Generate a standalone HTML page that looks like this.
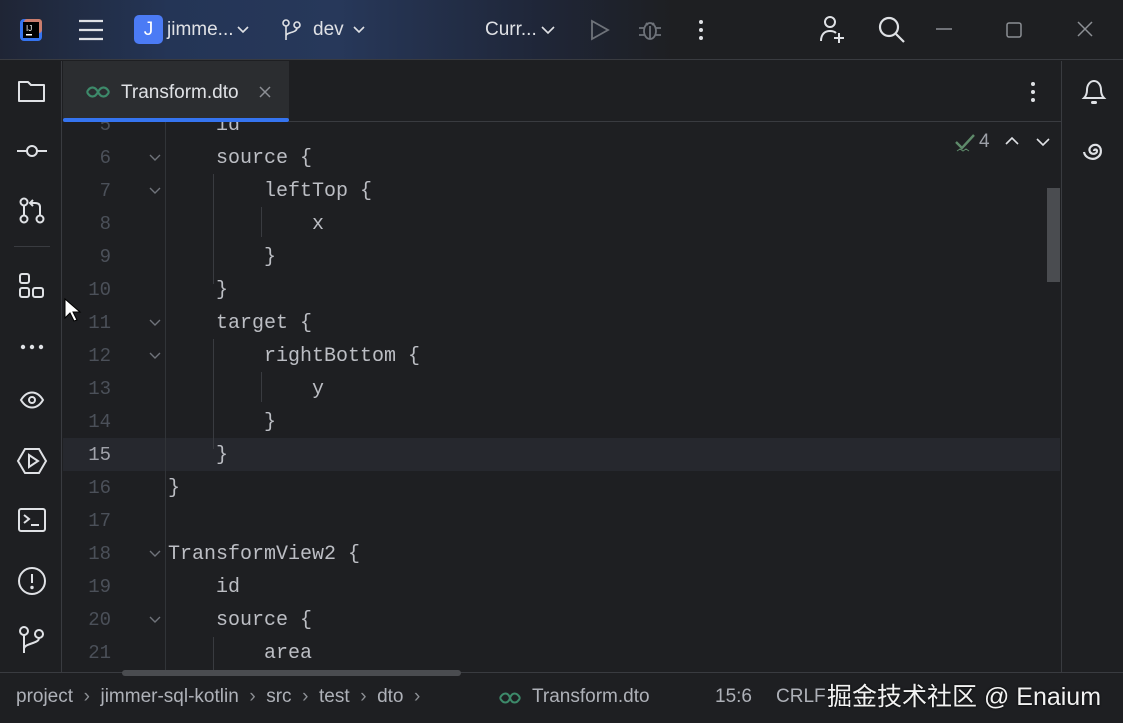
<!DOCTYPE html>
<html><head><meta charset="utf-8"><style>
*{margin:0;padding:0;box-sizing:border-box}
body{width:1123px;height:723px;overflow:hidden;background:#1e1f22;font-family:"Liberation Sans",sans-serif;color:#dfe1e5;position:relative}
.abs{position:absolute}
#title{left:0;top:0;width:1123px;height:60px;background:linear-gradient(90deg,#1f2535 0%,#243556 15%,#27385a 30%,#1f2638 48%,#1e1f22 60%);border-bottom:1px solid #393b40}
.tt{font-size:19px;color:#dfe1e5}
#left{left:0;top:61px;width:62px;height:611px;border-right:1px solid #393b40}
#right{left:1061px;top:61px;width:62px;height:611px;border-left:1px solid #393b40}
#tabs{left:63px;top:61px;width:998px;height:61px;border-bottom:1px solid #393b40}
#tab{left:63px;top:61px;width:226px;height:61px;background:#2b2d30}
#code{left:63px;top:122px;width:997px;height:550px;overflow:hidden;font-family:"Liberation Mono","DejaVu Sans Mono",monospace;font-size:20px;color:#bcbec4}
.ln{position:absolute;left:0;width:48px;text-align:right;color:#4b5059;font-size:19px;line-height:33px;margin-top:1px}
.tx{position:absolute;left:105px;white-space:pre;line-height:33px;margin-top:1px}
#status{left:0;top:672px;width:1123px;height:51px;border-top:1px solid #393b40;font-size:19px;color:#aeb1b8}
svg{position:absolute;overflow:visible}
</style></head><body>
<div id="title" class="abs">
 <svg style="left:18px;top:17px" width="26" height="26"><rect x="2" y="2" width="22" height="22" rx="4" fill="#3574f0"/><rect x="6" y="2" width="18" height="14" rx="3" fill="#f07f4c" opacity=".8"/><rect x="5" y="5" width="16" height="16" fill="#000"/><text x="8" y="14" font-size="8" fill="#fff" font-family="Liberation Sans">IJ</text><rect x="8" y="17" width="6" height="1.5" fill="#fff"/></svg>
 <svg style="left:78px;top:19px" width="26" height="22"><g stroke="#dfe1e5" stroke-width="2.2"><line x1="1" y1="2" x2="25" y2="2"/><line x1="1" y1="11" x2="25" y2="11"/><line x1="1" y1="20" x2="25" y2="20"/></g></svg>
 <div class="abs" style="left:134px;top:15px;width:29px;height:29px;background:#4b7bf5;border-radius:5px;text-align:center;line-height:29px;font-size:19px;color:#fff">J</div>
 <div class="abs tt" style="left:167px;top:19px">jimme...</div>
 <svg style="left:237px;top:26px" width="12" height="8"><path d="M1 1l5 5 5-5" stroke="#dfe1e5" stroke-width="1.6" fill="none"/></svg>
 <svg style="left:282px;top:19px" width="20" height="22"><g stroke="#dfe1e5" stroke-width="1.6" fill="none"><circle cx="4" cy="4" r="3"/><circle cx="15" cy="6" r="3"/><path d="M4 7v14M15 9c0 5-11 4-11 8"/></g></svg>
 <div class="abs tt" style="left:313px;top:19px">dev</div>
 <svg style="left:353px;top:26px" width="12" height="8"><path d="M1 1l5 5 5-5" stroke="#dfe1e5" stroke-width="1.6" fill="none"/></svg>
 <div class="abs tt" style="left:485px;top:19px">Curr...</div>
 <svg style="left:541px;top:26px" width="14" height="8"><path d="M1 1l6 6 6-6" stroke="#dfe1e5" stroke-width="1.6" fill="none"/></svg>
 <svg style="left:590px;top:19px" width="20" height="22"><path d="M2 2l16 9-16 9z" stroke="#6f737a" stroke-width="1.8" fill="none"/></svg>
 <svg style="left:638px;top:18px" width="24" height="24"><g stroke="#6f737a" stroke-width="1.8" fill="none"><ellipse cx="12" cy="13" rx="6" ry="8"/><path d="M8 5l2 2M16 5l-2 2M1 10h5M18 10h5M1 17h5M18 17h5M12 8v13"/></g></svg>
 <svg style="left:698px;top:19px" width="6" height="22"><g fill="#dfe1e5"><circle cx="3" cy="3" r="2"/><circle cx="3" cy="11" r="2"/><circle cx="3" cy="19" r="2"/></g></svg>
 <svg style="left:819px;top:15px" width="28" height="28"><g stroke="#dfe1e5" stroke-width="2" fill="none"><circle cx="11" cy="7" r="5"/><path d="M2 26c0-7 4-10 9-10 3 0 5 1 6 2M15 23h10M20 18v10"/></g></svg>
 <svg style="left:878px;top:16px" width="28" height="28"><g stroke="#dfe1e5" stroke-width="2.2" fill="none"><circle cx="11" cy="11" r="9"/><path d="M18 18l8 8"/></g></svg>
 <svg style="left:936px;top:28px" width="16" height="2"><line x1="0" y1="1" x2="16" y2="1" stroke="#8c8f94" stroke-width="1.5"/></svg>
 <svg style="left:1006px;top:22px" width="16" height="16"><rect x="1" y="1" width="14" height="14" rx="2" stroke="#8c8f94" stroke-width="1.5" fill="none"/></svg>
 <svg style="left:1077px;top:21px" width="16" height="16"><path d="M1 1l14 14M15 1L1 15" stroke="#8c8f94" stroke-width="1.5"/></svg>
</div>

<div id="left" class="abs"></div>
<svg style="left:18px;top:79px" width="28" height="24"><path d="M1 3h9l3 3h13v16H1z" stroke="#dfe1e5" stroke-width="2" fill="none" stroke-linejoin="round"/></svg>
<svg style="left:17px;top:141px" width="30" height="20"><g stroke="#dfe1e5" stroke-width="2" fill="none"><circle cx="15" cy="10" r="5"/><path d="M0 10h10M20 10h10"/></g></svg>
<svg style="left:18px;top:197px" width="28" height="28"><g stroke="#dfe1e5" stroke-width="2" fill="none"><circle cx="6" cy="5" r="3.5"/><circle cx="6" cy="22" r="3.5"/><circle cx="22" cy="22" r="3.5"/><path d="M6 9v9M22 18v-8c0-3-2-4-5-4h-4M15 3l-3 3 3 3"/></g></svg>
<div class="abs" style="left:14px;top:246px;width:36px;height:1px;background:#393b40"></div>
<svg style="left:19px;top:272px" width="26" height="28"><g stroke="#dfe1e5" stroke-width="2" fill="none"><rect x="1" y="2" width="9" height="9" rx="2"/><rect x="1" y="16" width="9" height="9" rx="2"/><rect x="14" y="16" width="10" height="9" rx="2"/></g></svg>
<svg style="left:20px;top:344px" width="26" height="6"><g fill="#dfe1e5"><circle cx="3" cy="3" r="2.2"/><circle cx="12" cy="3" r="2.2"/><circle cx="21" cy="3" r="2.2"/></g></svg>
<svg style="left:19px;top:390px" width="26" height="20"><g stroke="#dfe1e5" stroke-width="2" fill="none"><path d="M2 10c6-10 16-10 22 0-6 10-16 10-22 0z"/><circle cx="13" cy="10" r="3"/></g></svg>
<svg style="left:17px;top:446px" width="30" height="30"><g stroke="#dfe1e5" stroke-width="2" fill="none"><path d="M8 3h14l7 12-7 12H8L1 15z"/><path d="M12 9l9 6-9 6z"/></g></svg>
<svg style="left:18px;top:507px" width="28" height="26"><g stroke="#dfe1e5" stroke-width="2" fill="none"><rect x="1" y="2" width="26" height="22" rx="2"/><path d="M6 8l5 4-5 4M13 18h8"/></g></svg>
<svg style="left:17px;top:566px" width="30" height="30"><g stroke="#dfe1e5" stroke-width="2" fill="none"><circle cx="15" cy="15" r="13"/><path d="M15 8v9"/></g><circle cx="15" cy="21.5" r="1.7" fill="#dfe1e5"/></svg>
<svg style="left:19px;top:626px" width="28" height="28"><g stroke="#dfe1e5" stroke-width="2" fill="none"><circle cx="5" cy="5" r="4"/><circle cx="20" cy="8" r="4"/><path d="M5 9v18M20 12c0 6-15 5-15 11"/></g></svg>

<div id="right" class="abs"></div>
<svg style="left:1081px;top:78px" width="26" height="28"><g stroke="#dfe1e5" stroke-width="2" fill="none"><path d="M3 20c2-2 3-4 3-8 0-5 3-9 7-9s7 4 7 9c0 4 1 6 3 8z"/></g><rect x="10" y="23" width="6" height="3" rx="1.5" fill="#dfe1e5"/></svg>
<svg style="left:1081px;top:138px" width="26" height="26"><path d="M13 13c0-2 3-2 3 0 0 3-5 4-7 1-2-4 2-8 7-7 5 2 5 9 1 12-5 4-13 1-14-5" stroke="#dfe1e5" stroke-width="2.2" fill="none"/></svg>

<div id="tabs" class="abs"></div>
<div id="tab" class="abs"></div>
<div class="abs" style="left:63px;top:118px;width:226px;height:4px;background:#3574f0;border-radius:2px"></div>
<svg style="left:85px;top:85px" width="26" height="14"><path d="M2 7c3-6 8-6 11 0s8 6 11 0M2 7c3 6 8 6 11 0s8-6 11 0" stroke="#3d8a6a" stroke-width="2.2" fill="none"/></svg>
<div class="abs" style="left:121px;top:82px;font-size:19px;color:#dfe1e5">Transform.dto</div>
<svg style="left:259px;top:86px" width="12" height="12"><path d="M1 1l10 10M11 1L1 11" stroke="#8c8f94" stroke-width="1.5"/></svg>
<svg style="left:1030px;top:81px" width="6" height="22"><g fill="#dfe1e5"><circle cx="3" cy="3" r="2"/><circle cx="3" cy="11" r="2"/><circle cx="3" cy="19" r="2"/></g></svg>

<div id="code" class="abs">
 <div class="abs" style="left:0;top:316px;width:997px;height:33px;background:#26282e"></div>
 <div class="abs" style="left:102px;top:0;width:1px;height:550px;background:#313438"></div>
 <div class="abs" style="left:150px;top:52px;width:1px;height:110px;background:#393b40"></div>
 <div class="abs" style="left:198px;top:85px;width:1px;height:30px;background:#393b40"></div>
 <div class="abs" style="left:150px;top:217px;width:1px;height:110px;background:#393b40"></div>
 <div class="abs" style="left:198px;top:250px;width:1px;height:30px;background:#393b40"></div>
 <div class="abs" style="left:150px;top:515px;width:1px;height:40px;background:#393b40"></div>
 <div class="abs" style="left:984px;top:66px;width:13px;height:94px;background:#4a4c50"></div>
 <svg style="left:892px;top:12px" width="22" height="18"><path d="M1 8l6 6L19 1" stroke="#5e8a6a" stroke-width="2.4" fill="none"/><path d="M2 17l3-2 3 2 3-2 3 2" stroke="#5e8a6a" stroke-width="1" fill="none"/></svg>
 <div class="abs" style="left:916px;top:9px;font-family:'Liberation Sans';font-size:19px;color:#9da0a8">4</div>
 <svg style="left:942px;top:15px" width="14" height="8"><path d="M1 7l6-6 6 6" stroke="#dfe1e5" stroke-width="1.6" fill="none"/></svg>
 <svg style="left:973px;top:16px" width="14" height="8"><path d="M1 1l6 6 6-6" stroke="#dfe1e5" stroke-width="1.6" fill="none"/></svg>

 <div class="ln" style="top:-14px">5</div><div class="tx" style="top:-14px">    id</div>
 <div class="ln" style="top:19px">6</div><div class="tx" style="top:19px">    source {</div>
 <div class="ln" style="top:52px">7</div><div class="tx" style="top:52px">        leftTop {</div>
 <div class="ln" style="top:85px">8</div><div class="tx" style="top:85px">            x</div>
 <div class="ln" style="top:118px">9</div><div class="tx" style="top:118px">        }</div>
 <div class="ln" style="top:151px">10</div><div class="tx" style="top:151px">    }</div>
 <div class="ln" style="top:184px">11</div><div class="tx" style="top:184px">    target {</div>
 <div class="ln" style="top:217px">12</div><div class="tx" style="top:217px">        rightBottom {</div>
 <div class="ln" style="top:250px">13</div><div class="tx" style="top:250px">            y</div>
 <div class="ln" style="top:283px">14</div><div class="tx" style="top:283px">        }</div>
 <div class="ln" style="top:316px;color:#a1a3ab">15</div><div class="tx" style="top:316px">    }</div>
 <div class="ln" style="top:349px">16</div><div class="tx" style="top:349px">}</div>
 <div class="ln" style="top:382px">17</div>
 <div class="ln" style="top:415px">18</div><div class="tx" style="top:415px">TransformView2 {</div>
 <div class="ln" style="top:448px">19</div><div class="tx" style="top:448px">    id</div>
 <div class="ln" style="top:481px">20</div><div class="tx" style="top:481px">    source {</div>
 <div class="ln" style="top:514px">21</div><div class="tx" style="top:514px">        area</div>

 <svg style="left:86px;top:32px" width="12" height="7"><path d="M1 1l5 5 5-5" stroke="#6f737a" stroke-width="1.4" fill="none"/></svg>
 <svg style="left:86px;top:65px" width="12" height="7"><path d="M1 1l5 5 5-5" stroke="#6f737a" stroke-width="1.4" fill="none"/></svg>
 <svg style="left:86px;top:197px" width="12" height="7"><path d="M1 1l5 5 5-5" stroke="#6f737a" stroke-width="1.4" fill="none"/></svg>
 <svg style="left:86px;top:230px" width="12" height="7"><path d="M1 1l5 5 5-5" stroke="#6f737a" stroke-width="1.4" fill="none"/></svg>
 <svg style="left:86px;top:428px" width="12" height="7"><path d="M1 1l5 5 5-5" stroke="#6f737a" stroke-width="1.4" fill="none"/></svg>
 <svg style="left:86px;top:494px" width="12" height="7"><path d="M1 1l5 5 5-5" stroke="#6f737a" stroke-width="1.4" fill="none"/></svg>
</div>
<svg style="left:64px;top:298px" width="18" height="26"><path d="M1 1v19l5-5 4 8 3-1-4-8h7z" fill="#fff" stroke="#000" stroke-width="1"/></svg>

<div id="status" class="abs">
 <div class="abs" style="left:122px;top:-3px;width:339px;height:6px;background:#4a4c50;border-radius:3px"></div>
 <div class="abs" style="left:16px;top:13px;white-space:pre">project  <span style="color:#8c8f94">›</span>  jimmer-sql-kotlin  <span style="color:#8c8f94">›</span>  src  <span style="color:#8c8f94">›</span>  test  <span style="color:#8c8f94">›</span>  dto  <span style="color:#8c8f94">›</span></div>
 <svg style="left:498px;top:18px" width="24" height="14"><path d="M2 7c3-6 8-6 10 0s7 6 10 0M2 7c3 6 8 6 10 0s7-6 10 0" stroke="#3d8a6a" stroke-width="2" fill="none"/></svg>
 <div class="abs" style="left:532px;top:13px">Transform.dto</div>
 <div class="abs" style="left:715px;top:13px">15:6</div>
 <div class="abs" style="left:776px;top:13px">CRLF</div>
 <div class="abs" style="left:827px;top:4px;font-size:25px;color:#f2f2f2;font-family:'Liberation Sans','Noto Sans CJK SC',sans-serif;white-space:nowrap;text-shadow:0 0 2px #000">掘金技术社区 @ Enaium</div>
</div>
</body></html>
